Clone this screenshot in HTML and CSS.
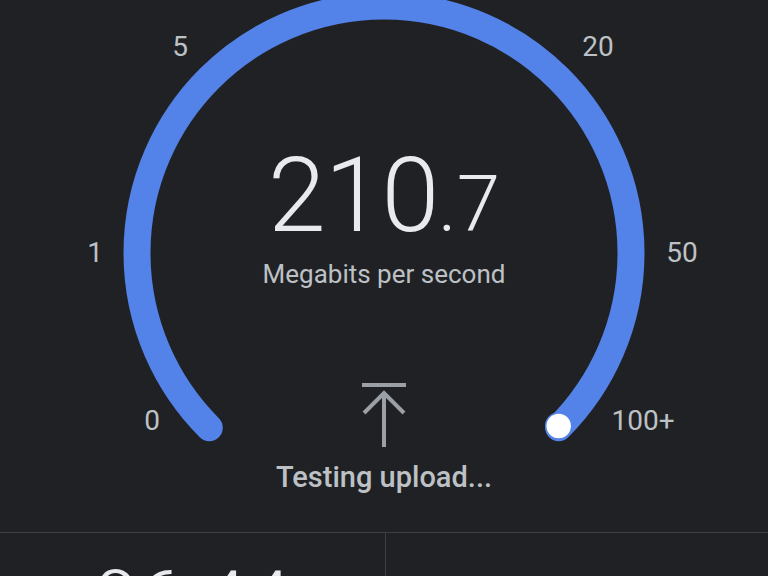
FILE: index.html
```html
<!DOCTYPE html>
<html lang="en">
<head>
<meta charset="utf-8">
<title>Speed test</title>
<link rel="stylesheet" href="styles.css">
</head>
<body>
<main class="app">
  <section class="gauge">
    <svg class="gauge-arc" width="768" height="532" viewBox="0 0 768 532" aria-hidden="true">
      <path d="M 209.3 427.7 A 247 247 0 1 1 558.7 427.7" fill="none" stroke="#5383e8" stroke-width="27" stroke-linecap="round"/>
      <circle cx="558.7" cy="426" r="13" fill="#ffffff" stroke="#5383e8" stroke-width="1.5"/>
    </svg>
    <span class="tick" style="left:152px;top:421px">0</span>
    <span class="tick" style="left:95px;top:253px">1</span>
    <span class="tick" style="left:180px;top:47px">5</span>
    <span class="tick" style="left:598px;top:47px">20</span>
    <span class="tick" style="left:682px;top:253px">50</span>
    <span class="tick" style="left:643px;top:421px">100+</span>

    <div class="readout">
      <div class="value">210<span class="decimal">.7</span></div>
      <div class="unit">Megabits per second</div>
      <svg class="upload-icon" width="48" height="68" viewBox="0 0 48 68" aria-hidden="true">
        <line x1="2" y1="5" x2="46" y2="5" stroke="#9aa0a6" stroke-width="4"/>
        <line x1="24" y1="14" x2="24" y2="67" stroke="#9aa0a6" stroke-width="4"/>
        <polyline points="4,33 24,13 44,33" fill="none" stroke="#9aa0a6" stroke-width="4"/>
      </svg>
      <div class="status">Testing upload...</div>
    </div>
  </section>

  <section class="results">
    <div class="result">
      <div class="result-value">96.44</div>
    </div>
    <div class="result"></div>
  </section>
</main>
</body>
</html>
```

FILE: styles.css
```css
* { box-sizing: border-box; }

html, body {
  margin: 0;
  padding: 0;
  background: #202124;
  overflow: hidden;
}

body {
  font-family: Roboto, "Noto Sans", "Liberation Sans", sans-serif;
  color: #e8eaed;
  width: 768px;
  height: 576px;
}

.app {
  display: flex;
  flex-direction: column;
  height: 576px;
}

.gauge {
  position: relative;
  height: 532px;
  flex: none;
}

.gauge-arc {
  position: absolute;
  left: 0;
  top: 0;
}

.tick {
  position: absolute;
  transform: translate(-50%, -50%);
  font-size: 28px;
  line-height: 1;
  color: #bdc1c6;
  white-space: nowrap;
}

.readout {
  position: relative;
  display: flex;
  flex-direction: column;
  align-items: center;
  padding-top: 144px;
}

.value {
  font-size: 104px;
  font-weight: 300;
  line-height: 1;
  height: 104px;
  color: #e8eaed;
  letter-spacing: -1px;
}

.decimal {
  font-size: 78px;
  line-height: 1;
  letter-spacing: 0;
}

.unit {
  margin-top: 13px;
  font-size: 26px;
  line-height: 1;
  color: #bdc1c6;
}

.upload-icon {
  display: block;
  margin-top: 93px;
}

.status {
  margin-top: 15px;
  font-size: 29px;
  font-weight: 500;
  line-height: 1;
  color: #bdc1c6;
}

.results {
  flex: 1;
  display: grid;
  grid-template-columns: 385px 1fr;
  border-top: 1px solid #3c4043;
  overflow: hidden;
}

.result {
  display: flex;
  justify-content: center;
  padding-top: 27px;
}

.result + .result {
  border-left: 1px solid #3c4043;
}

.result-value {
  font-size: 80px;
  font-weight: 300;
  line-height: 1;
  color: #e8eaed;
}
```
